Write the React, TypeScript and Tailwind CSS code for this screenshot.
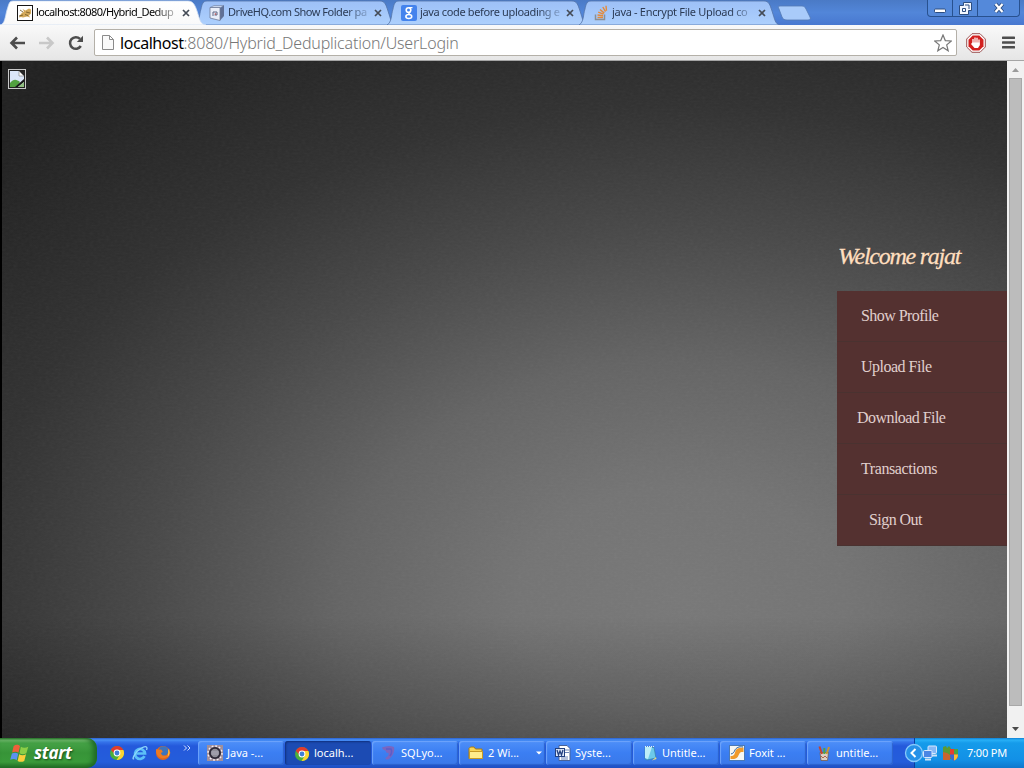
import React from "react";

type IconName =
  | "chrome" | "ie" | "firefox" | "eclipse" | "sqlyog" | "folder" | "word"
  | "notepad" | "foxit" | "paint" | "network" | "shield"
  | "tomcat" | "drive" | "google" | "stack";

function Icon({ name }: { name: IconName }) {
  const art: Record<IconName, React.ReactNode> = {
    chrome: (
      <>
        <circle cx="8" cy="8" r="7" fill="#4caf3c" />
        <path d="M8 1a7 7 0 0 1 6.3 4H8L5 8.5 1.8 4.8A7 7 0 0 1 8 1z" fill="#e23b2e" />
        <path d="M14.4 5A7 7 0 0 1 7.6 15L11 9.5 10 5z" fill="#fbd532" />
        <circle cx="8" cy="8" r="3.4" fill="#fff" />
        <circle cx="8" cy="8" r="2.4" fill="#3f7fd8" />
      </>
    ),
    ie: (
      <>
        <path d="M12.500 11.200A5 5 0 1 1 13 8.500H4.500" fill="none" stroke="#5cc0f8" strokeWidth="2.700" />
        <path d="M2 13.5C-.5 16 2 7.500 9 3.300 14 .3 16 2 14.500 5" fill="none" stroke="#8fd6fb" strokeWidth="1.300" />
      </>
    ),
    firefox: (
      <>
        <circle cx="8" cy="8" r="7" fill="#e0661d" />
        <circle cx="8.500" cy="6" r="4.800" fill="#3c74bd" />
        <path d="M1.300 4l2 .8 3-.3 1.500 2.500-2 1 1.500 2.500 4 .2 2.500-3.200.5-4 1 4.500a7 7 0 1 1-14-4z" fill="#ee7a22" />
        <path d="M13 3.500c2 3 2 6-.5 8.500 1-3 1-5 .5-8.500z" fill="#fdd24a" />
      </>
    ),
    eclipse: (
      <>
        <rect x="0" y="0" width="16" height="16" fill="#a08f9b" />
        <circle cx="8" cy="8" r="7" fill="none" stroke="#f4eef2" strokeWidth="1.500" strokeDasharray="1.800 1.870" />
        <circle cx="8" cy="8" r="6" fill="#2d2836" />
        <circle cx="8" cy="8" r="4.200" fill="#8f8d98" />
        <path d="M4.500 7h7M4.500 9h7" stroke="#b9b6c4" strokeWidth=".8" />
      </>
    ),
    sqlyog: (
      <>
        <path d="M1 2.500c4-1.500 8-2 12-.5 1 4-1 9-5 12-2 1-4 .5-3.500-1 2.500-1.500 3.500-3 3-5-2 0-3-1-2.500-2-2-1-4-2-4-3.500z" fill="#7a66c0" />
        <path d="M5 4h5c1 2 1 4-1 7" fill="none" stroke="#5d5cc8" strokeWidth="1.500" />
      </>
    ),
    folder: (
      <>
        <path d="M1 13.500V3.500L2.500 2H6l1.500 2H14v9.500z" fill="#f8d557" stroke="#a87b12" />
        <path d="M1.500 13.500V6.500H14.500v7z" fill="#ffec8c" stroke="#c79a25" />
      </>
    ),
    word: (
      <>
        <path d="M4 .5h8l3 3v12H4z" fill="#fff" stroke="#496297" />
        <path d="M10 5h4M10 7.500h4M6 12h7M6 14h7" stroke="#6e87ba" />
        <rect x=".5" y="3.500" width="9" height="8" fill="#dce7fa" stroke="#23407f" />
        <path d="M2 5l1.500 5L5 6l1.500 4L8 5" fill="none" stroke="#23407f" strokeWidth="1.300" />
      </>
    ),
    notepad: (
      <>
        <path d="M3 2l9 .5 2 10.500-9 2-2-1z" fill="#6cc9ea" stroke="#357fa5" strokeWidth=".7" />
        <path d="M3 2v11l3 1 4-12z" fill="#bdeef8" />
        <path d="M3 1.500h9" stroke="#e7eef2" strokeDasharray="1 1" />
        <path d="M10 15.500l4.500-1.500-.5-2z" fill="#e4d68b" />
      </>
    ),
    foxit: (
      <>
        <rect x=".5" y=".5" width="15" height="15" fill="#f6f7f4" stroke="#4b79b5" />
        <path d="M1.500 11c4 0 4-2 5-5s4-3 8-3.500v4.500c-4-.5-4 1.500-5.500 4.500s-5 2.500-7.500 2.500z" fill="#f09a2a" />
        <path d="M2 9c3-1 3-2 4-4s4-4 8-3" fill="none" stroke="#31639d" />
      </>
    ),
    paint: (
      <>
        <path d="M4 7.500h8.500l-1 8H5z" fill="#d9d0c6" stroke="#76533d" strokeWidth=".7" />
        <path d="M6 9L3.500 1.500" stroke="#c9432c" strokeWidth="2" />
        <path d="M8.300 9V3" stroke="#4aa54c" strokeWidth="2" />
        <path d="M10.500 9l2.500-7" stroke="#c9952e" strokeWidth="2" />
        <path d="M5 11l2 2 2-2 2 2" fill="none" stroke="#b0674a" />
      </>
    ),
    network: (
      <>
        <rect x="6" y="1" width="8.500" height="7.500" rx="1" fill="#86b8f6" stroke="#d6e8fd" />
        <path d="M9 10.500h6" stroke="#cfe2f7" strokeWidth="2" />
        <rect x="1.500" y="5.500" width="8.500" height="7" rx="1" fill="#4b86e4" stroke="#d6e8fd" />
        <path d="M3 14.500h6" stroke="#cfe2f7" strokeWidth="2" />
      </>
    ),
    shield: (
      <>
        <path d="M1 2l3-1 1 2 2-2 3 4-1 9H1z" fill="#5c9a34" />
        <path d="M1 7l4 1 3 2v5H1z" fill="#c9642f" />
        <path d="M8 4h8v7c0 2-2 3.500-4 4.500-2-1-4-2.500-4-4.500z" fill="#e63e2f" />
        <path d="M12 4h4v5.500h-4z" fill="#4aa544" />
        <path d="M8 9.500h4v6c-2-1-4-2.500-4-4.500z" fill="#3b68d1" />
        <path d="M12 9.500h4c0 3.500-2 5-4 6z" fill="#f6c336" />
      </>
    ),
    tomcat: (
      <>
        <rect x=".5" y=".5" width="15" height="15" fill="#fff" stroke="#151515" />
        <path d="M2 12.500c1-3 3-5 5-6L5.500 4l3 1.500L12 3.500l2 1v4l-2 2 1 2-3-1-4 1-2-.5z" fill="#d3a95a" />
        <path d="M9 7l4 1M2 11l4-1M8 9.500l3 1M3 5l3 2" stroke="#6c5522" strokeWidth=".8" />
      </>
    ),
    drive: (
      <>
        <path d="M1 2.500l4-2h10L11 3z" fill="#c7d4ea" stroke="#6b7fa5" strokeWidth=".6" />
        <path d="M11 3l4-2.500V11l-4 4.500z" fill="#5f7096" />
        <path d="M1 2.500h10v13L1 13z" fill="#e9eef8" stroke="#6e7b98" strokeWidth=".8" />
        <path d="M4 11V7h4v3H5.500" fill="none" stroke="#5e6683" />
        <circle cx="6.500" cy="9" r=".8" fill="#c04040" />
      </>
    ),
    google: (
      <>
        <rect width="16" height="16" rx="2" fill="#4483ed" />
        <ellipse cx="7.500" cy="5" rx="2.300" ry="2.300" fill="none" stroke="#fff" strokeWidth="1.600" />
        <path d="M8 2.700h3.500M9.500 7c-2 1-2.500 1.500-.5 2.500" fill="none" stroke="#fff" strokeWidth="1.300" />
        <ellipse cx="7.800" cy="11.500" rx="2.900" ry="2" fill="none" stroke="#fff" strokeWidth="1.600" />
      </>
    ),
    stack: (
      <>
        <path d="M2.500 9.500v5h9v-5" fill="none" stroke="#8b8f94" strokeWidth="1.500" />
        <path d="M4.500 12.500h5.500M4.500 10l5.500.8M5.200 7.200l5.200 2M7 4.500l4.300 3.600M9.800 2l2.700 4.600M13 .8l.5 5" stroke="#e48a3a" strokeWidth="1.400" />
      </>
    ),
  };
  return (
    <svg viewBox="0 0 16 16" className="h-4 w-4 shrink-0">
      {art[name]}
    </svg>
  );
}

const tabs: { title: string; icon: IconName; style: string }[] = [
  { title: "localhost:8080/Hybrid_Dedup", icon: "tomcat", style: "tracking-[-0.58px] text-black" },
  { title: "DriveHQ.com Show Folder pa", icon: "drive", style: "tracking-[-0.47px] text-[#2b3b55]" },
  { title: "java code before uploading e", icon: "google", style: "tracking-[-0.36px] text-[#2b3b55]" },
  { title: "java - Encrypt File Upload co", icon: "stack", style: "tracking-[-0.31px] text-[#2b3b55]" },
];

function Tab({ index }: { index: number }) {
  const tab = tabs[index];
  const active = index === 0;
  return (
    <div className={active ? "relative z-10 h-[25px] w-48 shrink-0" : "relative h-[25px] w-48 shrink-0"}>
      <svg className="absolute top-0 left-0 h-[25px] w-[210px]" viewBox="0 0 210 25">
        <defs>
          <linearGradient id={"tab" + index} x1="0" y1="0" x2="0" y2="1">
            <stop offset="0" stopColor={active ? "#ffffff" : "#9dc0f7"} />
            <stop offset="1" stopColor={active ? "#f9f9f9" : "#add0fd"} />
          </linearGradient>
        </defs>
        <path
          d={active ? "M0 25C5 24 5 17 7 10 9 4 9 1 13 1H188C193 1 195 5 197 11 200 20 200 24 206 25Z" : "M3 25C8 22 7 15 9 9 10 4 11 1 15 1H188C193 1 194 5 196 11 199 20 199 24 204 25Z"}
          fill={"url(#tab" + index + ")"}
          stroke={active ? "#cfdef3" : "#5374a8"}
          strokeWidth=".8"
        />
      </svg>
      <div className="relative flex h-[25px] items-center pl-[17px]">
        <Icon name={tab.icon} />
        <div className={"ml-[3px] w-[142px] [mask-image:linear-gradient(to_right,black_118px,rgba(0,0,0,0.25)_139px)] text-[11px] whitespace-nowrap " + tab.style}>
          {tab.title}
        </div>
        <svg viewBox="0 0 8 8" className="ml-1 h-2 w-2 shrink-0">
          <path d="M1 1l6 6M7 1L1 7" stroke="#444b56" strokeWidth="1.700" />
        </svg>
      </div>
    </div>
  );
}

function WindowButtons() {
  return (
    <div className="mr-[4px] ml-auto flex h-[17px] rounded-b border border-t-0 border-[#28518f] bg-[#5489da]">
      <div className="flex w-[25px] items-center justify-center border-r border-[#28518f]">
        <svg viewBox="0 0 12 12" className="h-3 w-3"><rect x=".5" y="7" width="11" height="3.500" rx="1" fill="#fff" stroke="#2c4d80" /></svg>
      </div>
      <div className="flex w-[25px] items-center justify-center border-r border-[#28518f]">
        <svg viewBox="0 0 13 13" className="h-[13px] w-[13px]">
          <path d="M4.500.5h8v8h-3v4h-9v-9h4z" fill="#f2f7ff" stroke="#2c4d80" />
          <path d="M6 3h4v4M3.500 6.500h3v3h-3z" fill="none" stroke="#2c4d80" />
        </svg>
      </div>
      <div className="flex w-[41px] items-center justify-center">
        <svg viewBox="0 0 12 12" className="h-3 w-3">
          <path d="M2.500 2l7 8M9.500 2l-7 8" stroke="#2c4d80" strokeWidth="4" />
          <path d="M2.500 2l7 8M9.500 2l-7 8" stroke="#fff" strokeWidth="2.200" />
        </svg>
      </div>
    </div>
  );
}

function Toolbar() {
  return (
    <div className="flex h-9 shrink-0 items-center border-b border-[#a5a5a5] bg-linear-to-b from-[#f9f9f9] to-[#e6e6e6] pl-[9px]">
      <svg viewBox="0 0 16 14" className="h-[14px] w-4"><path d="M16 7H3M8 1.500L2.500 7 8 12.500" fill="none" stroke="#4d4d4d" strokeWidth="2.600" /></svg>
      <svg viewBox="0 0 16 14" className="ml-[14px] h-[14px] w-4"><path d="M0 7h13M8 1.500L13.500 7 8 12.500" fill="none" stroke="#c8c8c8" strokeWidth="2.600" /></svg>
      <svg viewBox="0 0 16 16" className="ml-[13px] h-4 w-4">
        <path d="M12.800 11A5.800 5.800 0 1 1 12 3.900" fill="none" stroke="#4d4d4d" strokeWidth="2.500" />
        <path d="M15 .8v6.200H8.800z" fill="#4d4d4d" />
      </svg>
      <div className="ml-[10px] flex h-[27px] w-[863px] items-center rounded-[2px] border border-[#b4b0a8] bg-white pl-[7px]">
        <svg viewBox="0 0 12 15" className="h-[15px] w-3"><path d="M.5.5h7l4 4v10H.5zM7.500.5v4h4" fill="#fafafa" stroke="#8b8b8b" /></svg>
        <div className="ml-[6px] text-[16px] leading-none font-light tracking-[-0.19px] whitespace-nowrap text-[#777]">
          <span className="font-normal tracking-[-0.45px] text-black">localhost</span>:8080/Hybrid_Deduplication/UserLogin
        </div>
        <svg viewBox="0 0 18 18" className="mr-[4px] ml-auto h-[18px] w-[18px]">
          <path d="M9 1l2.300 5.600 6 .4-4.600 3.900 1.500 5.900L9 13.500l-5.200 3.300 1.500-5.900L.7 7l6-.4z" fill="#fff" stroke="#777" strokeWidth="1.200" />
        </svg>
      </div>
      <svg viewBox="0 0 20 20" className="ml-[9px] h-5 w-5">
        <path d="M6 .7h8L19.300 6v8L14 19.300H6L.7 14V6z" fill="#fff" stroke="#9c5050" />
        <path d="M6.700 2.500h6.600l4.200 4.200v6.600l-4.200 4.200H6.700l-4.200-4.200V6.700z" fill="#d2201f" />
        <path d="M7 6v5M9 4.500V11M11 4.800V11M13 6.500V12" stroke="#fff" strokeWidth="1.300" />
        <path d="M6.300 9.500h7.300v3L12 15H8.500L5 11z" fill="#fff" />
      </svg>
      <svg viewBox="0 0 13 13" className="ml-4 h-[13px] w-[13px]"><path d="M1 1.800h11M1 6.500h11M1 11.200h11" stroke="#4d4d4d" strokeWidth="2.600" strokeLinecap="round" /></svg>
    </div>
  );
}

const menu = [
  { label: "Show Profile", style: "pl-6 tracking-[-0.55px]" },
  { label: "Upload File", style: "pl-6 tracking-[-0.5px]" },
  { label: "Download File", style: "pl-5 tracking-[-0.55px]" },
  { label: "Transactions", style: "pl-6 tracking-[-0.42px]" },
  { label: "Sign Out", style: "pl-8 tracking-[-0.55px]" },
];

function PageView() {
  return (
    <div className="flex min-h-0 flex-1">
      <div className="relative flex w-[1007px] items-start justify-between overflow-hidden border-l-2 border-black bg-[linear-gradient(to_bottom,transparent_82%,rgba(0,0,0,0.25)),radial-gradient(ellipse_820px_570px_at_680px_540px,#787878_0%,#747474_20%,#646464_42%,#484848_65%,#313131_87%,#202020_115%)]">
        <svg className="absolute inset-0 h-full w-full opacity-[0.05]">
          <filter id="cloth"><feTurbulence type="fractalNoise" baseFrequency="0.25 0.5" numOctaves="2" seed="4" /><feColorMatrix type="saturate" values="0" /></filter>
          <rect width="100%" height="100%" filter="url(#cloth)" />
        </svg>
        <div className="mt-2 ml-[6px] flex h-5 w-[18px] items-center justify-center border border-[#c8c8c8]">
          <svg viewBox="0 0 14 16" className="h-4 w-[14px]">
            <path d="M0 0h9l5 5v11H0z" fill="#dce8fb" />
            <path d="M0 12c4-5 7-3 10-1l-3 5H0z" fill="#4fa03d" />
            <path d="M9 0h5v5z" fill="#222" />
            <path d="M9 0v5h5z" fill="#fff" stroke="#777" strokeWidth=".6" />
            <path d="M14 8v3l-6 5H5z" fill="#161616" />
            <path d="M14 11v5H8z" fill="#8fc07f" />
          </svg>
        </div>
        <div className="relative w-[170px] pt-[180px]">
          <h1 className="h-[50px] pl-px font-['Z003','URW_Chancery_L','Liberation_Serif',serif] text-[24px] leading-[30px] font-medium tracking-[-1.25px] whitespace-nowrap text-[#ffdfbf] italic [-webkit-text-stroke:0.3px_#ffdfbf]">Welcome rajat</h1>
          <div className="bg-[#543130]">
            {menu.map((m) => (
              <div key={m.label} className={"h-[51px] border-b border-[#4a3230] font-['Liberation_Serif',serif] text-[16px] leading-[50px] whitespace-nowrap text-[#e0cfcd] " + m.style}>
                {m.label}
              </div>
            ))}
          </div>
        </div>
      </div>
      <div className="flex w-[17px] flex-col items-center bg-[#f1f1f1]">
        <svg viewBox="0 0 17 17" className="h-[17px] w-[17px]"><path d="M5 11l3.500-4 3.500 4z" fill="#9b9b9b" /></svg>
        <div className="w-[13px] flex-1 border border-[#a8a8a8] bg-[#bcbcbc]" />
        <svg viewBox="0 0 17 32" className="h-8 w-[17px]"><path d="M5 21l3.500 4 3.500-4z" fill="#4a4a4a" /></svg>
      </div>
    </div>
  );
}

const tasks: { label: string; icon: IconName; pressed?: boolean; caret?: boolean }[] = [
  { label: "Java -...", icon: "eclipse" },
  { label: "localh...", icon: "chrome", pressed: true },
  { label: "SQLyo...", icon: "sqlyog" },
  { label: "2 Wi...", icon: "folder", caret: true },
  { label: "Syste...", icon: "word" },
  { label: "Untitle...", icon: "notepad" },
  { label: "Foxit ...", icon: "foxit" },
  { label: "untitle...", icon: "paint" },
];

function Taskbar() {
  return (
    <div className="flex h-[30px] shrink-0 bg-[linear-gradient(to_bottom,#2a60cf_0px,#4790f6_2px,#3573ea_4px,#2459db_8px,#245ddb_24px,#1f4fc0_30px)] text-[11px] text-white">
      <div className="flex w-[97px] items-center rounded-r-[10px] bg-[linear-gradient(to_bottom,#2d7a2d_0px,#74bd6f_2px,#45a146_5px,#379438_15px,#3a9a3a_24px,#226d24_30px)] pl-[10px] shadow-[inset_-4px_0_5px_#1f6a25]">
        <svg viewBox="0 0 18 18" className="h-[19px] w-[19px]">
          <path d="M3.500 2c2-1.800 4.500-1.500 6 0L8 8.300C6.500 7 4.500 7 2 8z" fill="#f0603a" />
          <path d="M10.300 2.500c2 1.300 4.500 1.300 7 0L15.500 8.700c-2 1.200-4.500 1.200-6.500 0z" fill="#8bce47" />
          <path d="M1.800 9C4 8 6 8 7.800 9.300l-1.500 6C4.500 14 2.500 14 .2 15z" fill="#5b92ef" />
          <path d="M8.700 9.700c2 1.300 4.500 1.300 6.500 0l-1.700 6.300c-2 1.200-4.500 1.200-6.300 0z" fill="#fbce3c" />
        </svg>
        <span className="mb-px ml-[5px] font-['Open_Sans',sans-serif] text-[17px] leading-none font-bold tracking-[-0.3px] italic [text-shadow:1px_1px_2px_#174d19]">start</span>
      </div>
      <div className="flex w-[101px] items-center pl-3">
        <Icon name="chrome" />
        <div className="ml-[7px]"><Icon name="ie" /></div>
        <div className="ml-[7px]"><Icon name="firefox" /></div>
        <svg viewBox="0 0 8 6" className="mb-[11px] ml-3 h-[6px] w-2"><path d="M1 .5L3.500 3 1 5.500M4.500.5L7 3 4.500 5.500" fill="none" stroke="#d7e5ff" /></svg>
      </div>
      <div className="flex gap-px pt-[3px]">
        {tasks.map((t) => (
          <div
            key={t.label}
            className={
              "flex h-[24px] w-[86px] items-center rounded-[3px] pl-[9px] " +
              (t.pressed
                ? "bg-[#1c4bb3] pt-px shadow-[inset_1px_1px_2px_#10307c]"
                : "bg-linear-to-b from-[#4e8ff8] via-[#3b7ef2] to-[#3a78e9] shadow-[inset_1px_1px_1px_#6fa5fb,inset_-1px_-1px_1px_#2c62cd]")
            }
          >
            <Icon name={t.icon} />
            <span className="ml-1 whitespace-nowrap">{t.label}</span>
            {t.caret && <svg viewBox="0 0 6 4" className="mr-[3px] ml-auto h-1 w-[6px]"><path d="M0 .5h6L3 3.500z" fill="#fff" /></svg>}
          </div>
        ))}
      </div>
      <div className="relative ml-auto flex w-[110px] items-center border-l border-[#0b3da0] bg-[linear-gradient(to_bottom,#0f7fd5_0px,#28b0f7_2px,#159bea_5px,#1290e6_22px,#0e77cc_30px)] pl-[7px]">
        <svg viewBox="0 0 20 20" className="absolute top-[5px] -left-[11px] h-5 w-5">
          <circle cx="10" cy="10" r="8.500" fill="#2691e8" stroke="#87c9fa" strokeWidth="1.300" />
          <path d="M11.500 6L7.500 10l4 4" fill="none" stroke="#fff" strokeWidth="2" />
        </svg>
        <Icon name="network" />
        <div className="ml-[4px]"><Icon name="shield" /></div>
        <span className="ml-[9px] tracking-[-0.2px] whitespace-nowrap">7:00 PM</span>
      </div>
    </div>
  );
}

export default function App() {
  return (
    <div className="flex h-[768px] w-[1024px] flex-col overflow-hidden bg-[#2e2e2e] font-['Noto_Sans',sans-serif]">
      <div className="flex h-[25px] shrink-0 bg-linear-to-b from-[#4a7ac6] via-[#5286d9] to-[#4878d0]">
        {tabs.map((t, i) => <Tab key={t.title} index={i} />)}
        <svg viewBox="0 0 34 16" className="mt-[5px] ml-[9px] h-4 w-[34px]">
          <path d="M3 1h22c2 0 3 1 4 3l4 8c1 2 0 3-2 3H10c-3 0-4-1-5-3L2 4C1 2 1 1 3 1z" fill="#a9cbfa" stroke="#5379b3" strokeWidth=".8" />
        </svg>
        <WindowButtons />
      </div>
      <Toolbar />
      <PageView />
      <Taskbar />
    </div>
  );
}
